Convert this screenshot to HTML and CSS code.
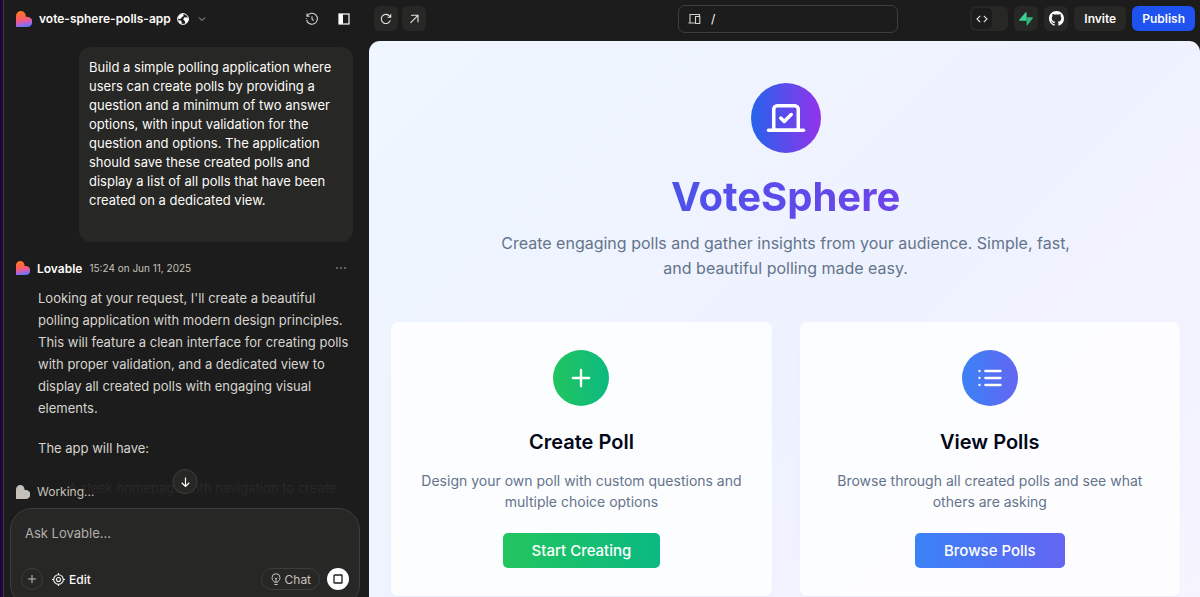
FILE: index.html
```
<!DOCTYPE html>
<html lang="en">
<head>
  <meta charset="UTF-8" />
  <meta name="viewport" content="width=device-width, initial-scale=1.0" />
  <title>vote-sphere-polls-app</title>
  <link rel="stylesheet" href="styles.css">
</head>
<body>

  <!-- Shared shapes -->
  <svg class="defs" width="0" height="0" aria-hidden="true">
    <defs>
      <linearGradient id="heartFill" x1="0.3" y1="0" x2="0.5" y2="1">
        <stop offset="0" stop-color="#ff7a1a" />
        <stop offset="0.5" stop-color="#fb5c66" />
        <stop offset="0.75" stop-color="#c45fc9" />
        <stop offset="1" stop-color="#5a78ff" />
      </linearGradient>
      <symbol id="heart" viewBox="0 0 16 16">
        <path d="M0 5a4.9 4.9 0 0 1 9.8 0v.7h1.4a4.9 4.9 0 0 1 0 10.3H0z" />
      </symbol>
    </defs>
  </svg>

  <div class="app">

    <!-- Chat side -->
    <aside class="sidebar">
      <header class="sidebar-header">
        <svg class="logo" width="16" height="16" aria-hidden="true"><use href="#heart" fill="url(#heartFill)" /></svg>
        <span class="project-name">vote-sphere-polls-app</span>
        <svg class="globe" width="12" height="12" viewBox="0 0 12 12" aria-hidden="true">
          <circle cx="6" cy="6" r="5.4" fill="#1c1c1c" stroke="#fff" />
          <path d="M1 4.2 3 1.6 5.6.8l1.1 1-.5 1.6-1.5.5-.3 1.4-1.6.6-1.8-.4zM7 4.6l2.6-.4 1.9 1.4-.4 2.6-1.7 2-1.2-.2-.3-2-1.6-1.2zM1.3 7.2l2.5.4 1 1.6-.5 2-2-1z" fill="#fff" />
        </svg>
        <button class="icon-button chevron" aria-label="Project menu">
          <svg width="8" height="8" viewBox="0 0 8 8" fill="none" stroke="#aaa"><path d="m1 2.5 3 3 3-3" /></svg>
        </button>
        <button class="icon-button history" aria-label="History">
          <svg width="14" height="14" viewBox="0 0 14 14" fill="none" stroke="#d4d2cc" stroke-width="1.1">
            <path d="M2.2 3.9A5.5 5.5 0 1 1 1.6 8" />
            <path d="M2 1.6v2.6h2.6M7 4.2V7l1.7 1.7" />
            <path d="M1.3 6.1v.6" />
          </svg>
        </button>
        <button class="icon-button" aria-label="Toggle sidebar">
          <svg width="12" height="12" viewBox="0 0 12 12"><rect x="1" y="1" width="10" height="10" fill="none" stroke="#fff" stroke-width="1.2" /><path d="M1 1h4v10H1z" fill="#fff" /></svg>
        </button>
      </header>

      <div class="chat">
        <div class="user-message">
          Build a simple polling application where users can create polls by providing a question and a minimum of two answer options, with input validation for the question and options. The application should save these created polls and display a list of all polls that have been created on a dedicated view.
        </div>

        <div class="reply-header">
          <svg width="14" height="14" aria-hidden="true"><use href="#heart" fill="url(#heartFill)" /></svg>
          <strong>Lovable</strong>
          <time datetime="2025-06-11T15:24">15:24 on Jun 11, 2025</time>
          <button class="icon-button more" aria-label="More">
            <svg width="12" height="4" viewBox="0 0 12 4" fill="#bbb"><circle cx="2" cy="2" r=".8" /><circle cx="6" cy="2" r=".8" /><circle cx="10" cy="2" r=".8" /></svg>
          </button>
        </div>

        <div class="reply">
          <p>Looking at your request, I'll create a beautiful polling application with modern design principles. This will feature a clean interface for creating polls with proper validation, and a dedicated view to display all created polls with engaging visual elements.</p>
          <p>The app will have:</p>
          <ul>
            <li>A sleek homepage with navigation to create</li>
          </ul>
        </div>

        <div class="chat-fade">
          <div class="status">
            <svg width="14" height="14" fill="#c5c1ba" aria-hidden="true"><use href="#heart" /></svg>
            Working...
          </div>
        </div>
        <button class="scroll-down" aria-label="Scroll to bottom">
          <svg width="12" height="12" viewBox="0 0 12 12" fill="none" stroke="#fff" stroke-width="1.2"><path d="M6 1.5v9M2.2 6.8 6 10.5l3.8-3.7" /></svg>
        </button>
      </div>

      <form class="composer">
        <input class="prompt" type="text" placeholder="Ask Lovable..." aria-label="Ask Lovable">
        <div class="composer-actions">
          <button type="button" class="round-button" aria-label="Add">
            <svg width="10" height="10" viewBox="0 0 10 10" stroke="#c5c1ba"><path d="M5 1v8M1 5h8" /></svg>
          </button>
          <button type="button" class="edit-button">
            <svg width="13" height="13" viewBox="0 0 13 13" fill="none" stroke="#f5f3ee" stroke-width="1.1"><circle cx="6.5" cy="6.5" r="4.8" /><circle cx="6.5" cy="6.5" r="2" /><path d="M6.5 0v2M6.5 11v2M0 6.5h2M11 6.5h2" /></svg>
            Edit
          </button>
          <button type="button" class="chat-button">
            <svg width="10" height="13" viewBox="0 0 10 13" fill="none" stroke="#c5c1ba"><path d="M3.2 9.2C3.2 7.9 1 7.3 1 4.700a4 4 0 0 1 8 0c0 2.6-2.2 3.2-2.2 4.5zM3.3 11.500h3.4M5 9V6M3.6 4.8 5 6l1.4-1.2" /></svg>
            Chat
          </button>
          <button type="button" class="stop-button" aria-label="Stop">
            <svg width="10" height="10" viewBox="0 0 10 10" fill="none" stroke="#1c1c1c" stroke-width="1.3"><rect x="1" y="1" width="8" height="8" rx=".6" /></svg>
          </button>
        </div>
      </form>
    </aside>

    <!-- Preview side -->
    <main class="workspace">
      <nav class="toolbar">
        <div class="toolbar-group">
          <button class="tool" aria-label="Reload">
            <svg width="12" height="12" viewBox="0 0 12 12" fill="none" stroke="#e6e4df" stroke-width="1.1"><path d="M10.3 7.3A4.6 4.6 0 1 1 9.6 3.2L10.7 4.3M10.7 1.2v3.1H7.6" /></svg>
          </button>
          <button class="tool" aria-label="Open in new tab">
            <svg width="12" height="12" viewBox="0 0 12 12" fill="none" stroke="#e6e4df" stroke-width="1.1"><path d="m2.5 9.8 7.2-7.2M3 2.3h7v7" /></svg>
          </button>
        </div>

        <label class="address">
          <svg width="13" height="12" viewBox="0 0 13 12" fill="none" stroke="#d4d2cc" stroke-width="1.1" aria-hidden="true"><path d="M2 9.5v-8h9.5v1.7M.5 10h6.2M7.5 3.5h4.3v7H7.5z" /></svg>
          <input type="text" value="/" aria-label="Page path">
        </label>

        <div class="toolbar-group right">
          <button class="tool code-toggle" aria-label="Code view">
            <span><svg width="12" height="10" viewBox="0 0 12 10" fill="none" stroke="#e6e4df" stroke-width="1.1"><path d="M4.2 1.8 1 5l3.2 3.2M7.8 1.8 11 5 7.8 8.2" /></svg></span>
          </button>
          <button class="tool" aria-label="Supabase">
            <svg width="14" height="14" viewBox="0 0 14 14"><path d="M7.600 5.200H13.300c.6 0 .9.600.5 1.100L8.500 13.300c-.4.500-1 .3-1-.3z" fill="#2bb57b" /><path d="M6.400.5c.4-.5 1.200-.3 1.200.3v8H.9c-.6 0-.9-.6-.6-1.100z" fill="#3ecf8e" /></svg>
          </button>
          <button class="tool" aria-label="GitHub">
            <svg width="15" height="15" viewBox="0 0 16 16" fill="#fff"><path d="M8 0C3.580 0 0 3.580 0 8c0 3.540 2.290 6.530 5.470 7.590.4.070.55-.17.55-.38 0-.19-.01-.82-.01-1.490-2.010.37-2.530-.49-2.690-.94-.09-.23-.48-.94-.82-1.130-.28-.15-.68-.52-.01-.53.63-.01 1.080.58 1.230.82.72 1.210 1.870.87 2.330.66.070-.52.28-.87.51-1.070-1.780-.2-3.640-.89-3.640-3.950 0-.87.31-1.590.82-2.150-.08-.2-.36-1.020.08-2.120 0 0 .67-.21 2.200.82.64-.18 1.320-.27 2-.27s1.360.09 2 .27c1.530-1.040 2.200-.82 2.200-.82.44 1.100.16 1.920.08 2.120.51.56.82 1.270.82 2.150 0 3.070-1.870 3.750-3.650 3.950.29.25.54.73.54 1.480 0 1.070-.01 1.930-.01 2.200 0 .21.15.46.55.38A8.010 8.010 0 0 0 16 8c0-4.420-3.580-8-8-8z" /></svg>
          </button>
          <button class="tool text">Invite</button>
          <button class="tool text publish">Publish</button>
        </div>
      </nav>

      <section class="preview">
        <div class="hero">
          <div class="hero-icon">
            <svg width="42" height="42" viewBox="0 0 24 24" fill="none" stroke="#fff" stroke-width="2" stroke-linecap="round" stroke-linejoin="round"><path d="m9 12 2 2 4-4" /><path d="M5 7c0-1.100.9-2 2-2h10a2 2 0 0 1 2 2v12H5V7Z" /><path d="M22 19H2" /></svg>
          </div>
          <h1>VoteSphere</h1>
          <p>Create engaging polls and gather insights from your audience. Simple, fast, and beautiful polling made easy.</p>
        </div>

        <div class="cards">
          <article class="card create">
            <div class="card-icon">
              <svg width="28" height="28" viewBox="0 0 24 24" fill="none" stroke="#fff" stroke-width="2" stroke-linecap="round"><path d="M5 12h14M12 5v14" /></svg>
            </div>
            <h2>Create Poll</h2>
            <p>Design your own poll with custom questions and multiple choice options</p>
            <button class="card-button">Start Creating</button>
          </article>
          <article class="card view">
            <div class="card-icon">
              <svg width="28" height="28" viewBox="0 0 24 24" fill="none" stroke="#fff" stroke-width="2" stroke-linecap="round"><path d="M8 6h13M8 12h13M8 18h13M3 6h.01M3 12h.01M3 18h.01" /></svg>
            </div>
            <h2>View Polls</h2>
            <p>Browse through all created polls and see what others are asking</p>
            <button class="card-button">Browse Polls</button>
          </article>
        </div>
      </section>
    </main>

  </div>

</body>
</html>
```
FILE: styles.css
```
* {
  box-sizing: border-box;
}

body {
  margin: 0;
  font-family: Inter, "Liberation Sans", sans-serif;
  background: #1c1c1c;
  color: #fcfbf8;
}

button,
input {
  font-family: inherit;
  color: inherit;
  border: 0;
  padding: 0;
  background: none;
}

button {
  cursor: pointer;
}

svg {
  display: block;
  flex: none;
}

.defs {
  position: absolute;
}

.app {
  display: grid;
  grid-template-columns: minmax(300px, 30.6%) 1fr;
  height: 100vh;
  overflow: hidden;
  border-left: 3px solid #1c0538;
}

/* Sidebar */
.sidebar {
  display: flex;
  flex-direction: column;
  min-width: 0;
  min-height: 0;
  padding: 0 9px 0 6px;
  border-left: 1px solid #3c3c40;
}

.sidebar-header {
  display: flex;
  align-items: center;
  height: 37px;
  flex: none;
  padding: 0 10px 0 6px;
}

.project-name {
  margin: 0 6px 0 7px;
  font-size: 12px;
  font-weight: 600;
}

.icon-button {
  display: flex;
}

.chevron {
  margin-left: 9px;
}

.history {
  margin-left: auto;
  margin-right: 19px;
}

.chat {
  position: relative;
  flex: 1;
  min-height: 0;
  overflow: hidden;
  padding: 10px 7px 0 6px;
}

.user-message {
  margin-left: 63px;
  padding: 11px 10px 32px;
  border-radius: 12px;
  background: #272725;
  font-size: 13px;
  line-height: 19px;
}

.reply-header {
  display: flex;
  align-items: center;
  height: 20px;
  margin-top: 16px;
  font-size: 12px;
}

.reply-header strong {
  margin: 0 7px;
  font-weight: 600;
}

.reply-header time {
  font-size: 10px;
  color: #c5c1ba;
}

.more {
  margin-left: auto;
  margin-right: 6px;
}

.reply {
  padding-left: 22px;
  font-size: 13px;
  line-height: 22px;
  color: #d6d4ce;
}

.reply p {
  margin: 9px 0 18px;
}

.reply ul {
  margin: 0;
  padding-left: 30px;
  list-style: none;
}

.reply li {
  white-space: nowrap;
}

.chat-fade {
  position: absolute;
  left: 0;
  right: 0;
  bottom: 0;
  padding: 24px 6px 7px;
  background: linear-gradient(transparent, #1c1c1ce8 40%, #1c1c1c);
}

.status {
  display: flex;
  align-items: center;
  gap: 7px;
  font-size: 12px;
  line-height: 18px;
  color: #c5c1ba;
}

.scroll-down {
  position: absolute;
  left: 50%;
  bottom: 14px;
  transform: translateX(-50%);
  display: grid;
  place-items: center;
  width: 25px;
  height: 25px;
  border: 1px solid #3d3d3a;
  border-radius: 50%;
  background: #272725;
}

.composer {
  flex: none;
  margin-bottom: -10px;
  padding: 14px 10px 16px 14px;
  border: 1px solid #3d3d3a;
  border-radius: 22px;
  background: #272725;
}

.prompt {
  display: block;
  width: 100%;
  height: 20px;
  margin-bottom: 25px;
  font-size: 13px;
  outline: none;
}

.prompt::placeholder {
  color: #b3b0aa;
  opacity: 1;
}

.composer-actions {
  display: flex;
  align-items: center;
  height: 22px;
  font-size: 12px;
}

.composer-actions button {
  display: flex;
  align-items: center;
  justify-content: center;
  gap: 4px;
  height: 22px;
  font-size: 12px;
}

.composer-actions .round-button {
  width: 22px;
  margin-left: -4px;
  border: 1px solid #3d3d3a;
  border-radius: 50%;
}

.composer-actions .edit-button {
  margin-left: 9px;
  font-weight: 500;
}

.composer-actions .chat-button {
  width: 59px;
  margin-left: auto;
  margin-right: 7px;
  border: 1px solid #3d3d3a;
  border-radius: 11px;
  color: #c5c1ba;
}

.composer-actions .stop-button {
  width: 22px;
  border-radius: 50%;
  background: #fff;
}

/* Workspace */
.workspace {
  display: flex;
  flex-direction: column;
  min-width: 0;
  min-height: 0;
}

.toolbar {
  display: grid;
  grid-template-columns: 1fr 220px 297px;
  align-items: center;
  flex: none;
  height: 37px;
  margin-bottom: 4px;
  padding: 0 5px;
}

.toolbar-group {
  display: flex;
  gap: 4px;
}

.toolbar-group.right {
  justify-content: flex-end;
  gap: 6px;
}

.tool {
  display: grid;
  place-items: center;
  min-width: 24px;
  height: 25px;
  border-radius: 6px;
  background: #272725;
}

.tool.text {
  padding: 0 10px;
  font-size: 12px;
  font-weight: 600;
}

.tool.publish {
  background: #1e52f1;
}

.code-toggle {
  width: 38px;
  place-items: center start;
  padding-left: 2px;
}

.code-toggle span {
  display: grid;
  place-items: center;
  width: 20px;
  height: 21px;
  border-radius: 5px;
  background: #1c1c1c;
}

.address {
  display: flex;
  align-items: center;
  gap: 10px;
  height: 28px;
  padding: 0 9px;
  border: 1px solid #3d3d3a;
  border-radius: 7px;
}

.address input {
  width: 100%;
  min-width: 0;
  font-size: 12px;
  outline: none;
}

/* Previewed page */
.preview {
  flex: 1;
  min-height: 0;
  overflow: hidden;
  padding: 42px 20px 0 22px;
  border-radius: 11px 11px 0 0;
  background: linear-gradient(135deg, #eff6ff, #eef2ff 55%, #faf5ff 125%);
  text-align: center;
}

.hero-icon,
.card-icon {
  display: grid;
  place-items: center;
  margin: 0 auto;
  border-radius: 50%;
}

.hero-icon {
  width: 70px;
  height: 70px;
  background: linear-gradient(90deg, #2563eb, #9333ea);
}

.hero h1 {
  max-width: 790px;
  margin: 18px auto 8px;
  font-size: 40px;
  line-height: 52px;
  font-weight: 700;
  color: transparent;
  background: linear-gradient(90deg, #2563eb, #9333ea);
  background-clip: text;
  -webkit-background-clip: text;
}

.hero p {
  max-width: 590px;
  margin: 0 auto;
  font-size: 16px;
  line-height: 25px;
  color: #64748b;
}

.cards {
  display: grid;
  grid-template-columns: 1fr 1fr;
  gap: 28px;
  margin-top: 41px;
}

.card {
  padding: 28px;
  border-radius: 7px;
  background: #ffffffcc;
  box-shadow: 0 1px 3px #0f172a08;
}

.card-icon {
  width: 56px;
  height: 56px;
}

.create .card-icon,
.create .card-button {
  background: linear-gradient(90deg, #22c55e, #0bb981);
}

.view .card-icon,
.view .card-button {
  background: linear-gradient(90deg, #3b82f6, #6366f1);
}

.card h2 {
  margin: 22px 0 14px;
  font-size: 20px;
  line-height: 28px;
  font-weight: 600;
  color: #020817;
}

.card p {
  margin: 0 0 21px;
  font-size: 14px;
  line-height: 21px;
  color: #64748b;
}

.card-button {
  height: 35px;
  padding: 0 29px;
  border-radius: 5px;
  font-size: 15px;
  font-weight: 500;
  color: #fff;
}
```
